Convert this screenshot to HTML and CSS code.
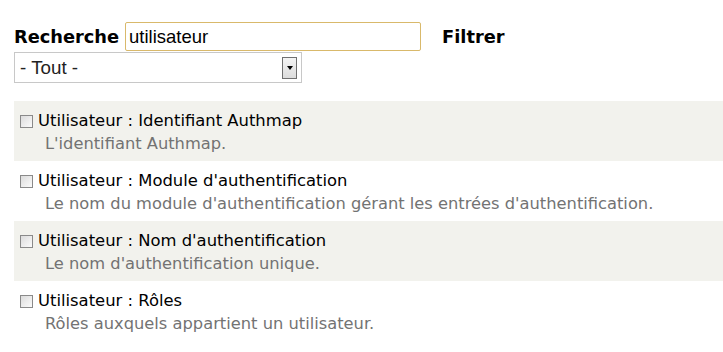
FILE: index.html
```html
<!DOCTYPE html>
<html lang="fr">
<head>
<meta charset="UTF-8" />
<title>Recherche</title>
<link rel="stylesheet" href="styles.css">
</head>
<body>
<div class="filter-bar">
  <div class="search-row">
    <label class="search-label" for="search">Recherche</label>
    <input type="text" id="search" class="search-input" value="utilisateur">
    <span class="filter-label">Filtrer</span>
  </div>
  <div class="select-box">
    <span class="select-text">- Tout -</span>
    <span class="select-btn"><span class="arrow"></span></span>
  </div>
</div>

<div class="field-list">
  <div class="field odd">
    <div class="field-title"><span class="check"></span>Utilisateur : Identifiant Authmap</div>
    <div class="field-desc">L'identifiant Authmap.</div>
  </div>
  <div class="field">
    <div class="field-title"><span class="check"></span>Utilisateur : Module d'authentification</div>
    <div class="field-desc">Le nom du module d'authentification gérant les entrées d'authentification.</div>
  </div>
  <div class="field odd">
    <div class="field-title"><span class="check"></span>Utilisateur : Nom d'authentification</div>
    <div class="field-desc">Le nom d'authentification unique.</div>
  </div>
  <div class="field">
    <div class="field-title"><span class="check"></span>Utilisateur : Rôles</div>
    <div class="field-desc">Rôles auxquels appartient un utilisateur.</div>
  </div>
</div>
</body>
</html>
```

FILE: styles.css
```css
body { margin:0; padding:22px 0 0 14px; font-family:"DejaVu Sans",sans-serif; background:#fff; color:#000; overflow:hidden; }
.filter-bar { margin-bottom:18px; }
.search-row { display:flex; align-items:center; height:29px; }
.search-label { font-weight:bold; font-size:17.8px; margin-right:6px; }
.search-input { box-sizing:border-box; width:296px; height:29px; border:1px solid #d9b96b; border-radius:2px; padding:0 3px; font-family:"Liberation Sans",sans-serif; font-size:18.5px; color:#000; outline:none; }
.filter-label { font-weight:bold; font-size:17.8px; margin-left:21px; }
.select-box { box-sizing:border-box; width:288px; height:31px; margin-top:1px; border:1px solid #c8c8c8; display:flex; align-items:center; justify-content:space-between; padding:0 4px 0 5px; }
.select-text { font-family:"Liberation Sans",sans-serif; font-size:18.8px; color:#222; }
.select-btn { box-sizing:border-box; width:15px; height:22px; border:1px solid #707070; background:linear-gradient(#f4f4f4,#dcdcdc); display:flex; align-items:center; justify-content:center; }
.arrow { width:0; height:0; border-left:3px solid transparent; border-right:3px solid transparent; border-top:4px solid #000; }
.field { height:60px; box-sizing:border-box; padding:9px 0 0 6px; }
.field.odd { background:#f2f2ed; }
.field-title { display:flex; align-items:center; font-size:16.4px; line-height:22px; color:#000; }
.check { box-sizing:border-box; width:13px; height:13px; border:1px solid #8a8a8a; background:linear-gradient(135deg,#dcdcdc,#fbfbfb); margin-right:5px; }
.field-desc { font-size:16.3px; line-height:23px; color:#737373; padding-left:25px; }
```
